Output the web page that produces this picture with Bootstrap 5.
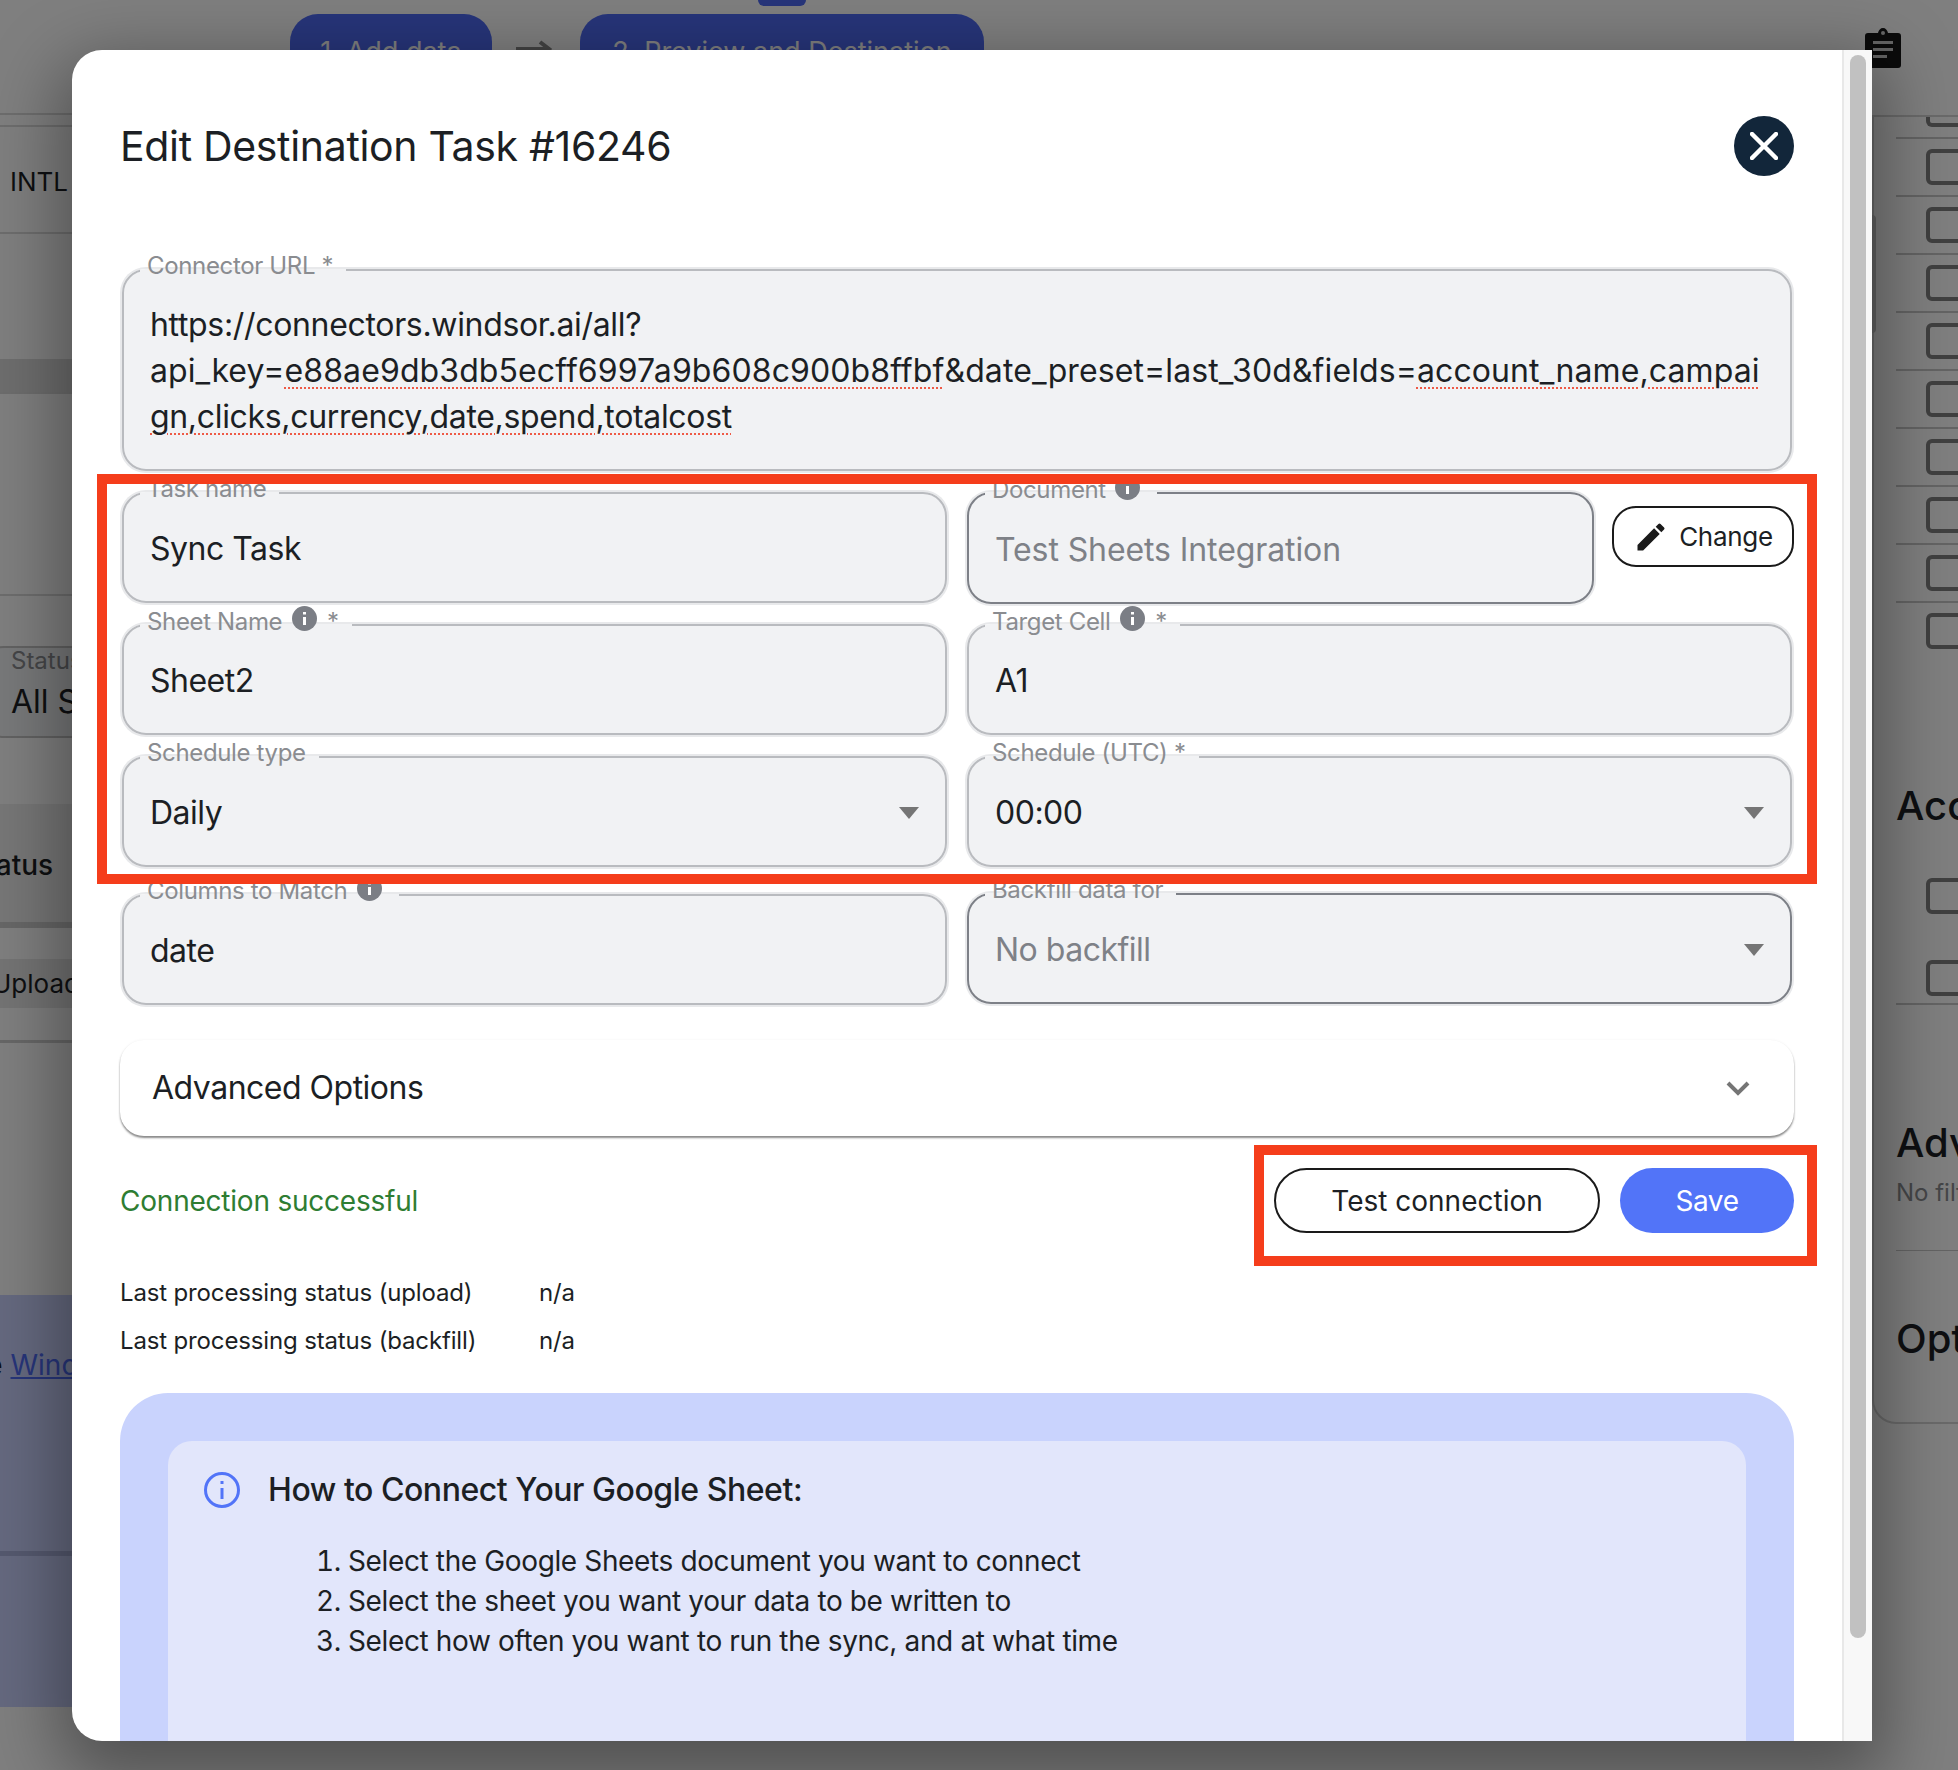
<!DOCTYPE html>
<html lang="en">
<head>
  <meta charset="UTF-8">
  <meta name="viewport" content="width=device-width, initial-scale=1.0">
  <title>Edit Destination Task</title>
  <link href="https://cdn.jsdelivr.net/npm/bootstrap@5.3.0/dist/css/bootstrap.min.css" rel="stylesheet">
  <style>
    html, body { height: 1770px; overflow: hidden; background: #fff; }
    body { font-family: Inter, "Liberation Sans", sans-serif; color: #1c1f24; position: relative; }

    /* page behind the dialog */
    .behind { height: 1770px; }
    .left-pane { width: 300px; overflow: hidden; font-size: 28px; flex: none; }
    .mid-pane { flex: 1 1 auto; position: relative; }
    .right-pane { width: 106px; flex: none; overflow: hidden; }
    .left-rule { border-bottom: 2px solid #dadada; }
    .lp-a { height: 115px; }
    .lp-b { height: 12px; }
    .lp-c { height: 107px; padding: 4px 0 0 10px; display: flex; align-items: center; font-size: 26px; }
    .lp-d { height: 125px; }
    .lp-band { height: 35px; background: #dcdcdc; }
    .lp-e { height: 202px; }
    .lp-field { margin: 50px 0 0 -20px; height: 92px; background: #f1f2f4; border: 2px solid #c4c4c4; border-radius: 24px; padding-left: 29px; }
    .lp-label { font-size: 24px; color: #8a8c90; line-height: 30px; margin-top: -2px; }
    .lp-value { line-height: 52px; font-size: 32px; }
    .lp-head { margin-top: 66px; height: 124px; background: #eee; font-weight: 500; padding-top: 40px; text-indent: -32px; border-bottom: 6px solid #cfcfcf; }
    .lp-upload { margin-top: 31px; height: 49px; background: #e8e8e8; line-height: 49px; text-indent: -8px; font-size: 26px; }
    .lp-end { height: 35px; border-bottom: 3px solid #cfcfcf; }
    .lp-panel { margin-top: 252px; height: 412px; background: #cad2fe; padding-top: 49px; text-indent: -48px; }
    .lp-panel a { color: #4e6af5; }
    .lp-panel-rule { margin-top: 165px; border-top: 5px solid #aab2de; }

    .step-pill { position: absolute; top: 14px; height: 80px; background: #4e6af5; color: #fff; border-radius: 28px; font-size: 27px; line-height: 76px; text-align: center; }
    .step-one { left: -10px; width: 202px; }
    .step-two { left: 280px; width: 404px; }
    .step-tab { position: absolute; top: 0; left: 458px; width: 48px; height: 6px; background: #4e6af5; border-radius: 0 0 6px 6px; }
    .step-arrow { position: absolute; left: 216px; top: 40px; }

    .clip-icon { display: block; margin: 28px 0 47px 13px; }
    .side-card { height: 1309px; border: 2px solid #d4d4d4; border-right: 0; border-radius: 0 0 0 24px; margin-left: 20px; padding-left: 22px; overflow: hidden; }
    .side-row { height: 58px; padding-top: 10px; border-bottom: 2px solid #c8c8c8; }
    .side-row.side-first { height: 22px; padding-top: 0; }
    .side-row.side-last { border-bottom: 0; height: 46px; }
    .tick { display: block; height: 36px; width: 70px; border: 4px solid #808080; border-radius: 6px; margin-left: 30px; }
    .side-first .tick { height: 10px; border-top: 0; border-radius: 0 0 6px 6px; }
    .side-title { font-size: 40px; font-weight: 500; line-height: 50px; white-space: nowrap; }
    .st-acc { margin-top: 132px; }
    .st-box-a { margin-top: 47px; }
    .st-box-b { margin-top: 46px; }
    .side-rule { margin-top: 7px; border-bottom: 2px solid #c8c8c8; }
    .st-adv { margin-top: 113px; }
    .side-note { font-size: 24px; color: #8a8c90; line-height: 30px; margin-top: 10px; white-space: nowrap; }
    .side-rule-b { margin-top: 42px; border-bottom: 1px solid #c8c8c8; }
    .st-opt { margin-top: 63px; }
    .thin-bar { position: absolute; left: 1872px; top: 215px; width: 4px; height: 118px; background: #c4c4c4; border-radius: 0 4px 4px 0; }

    .dim-layer { position: absolute; inset: 0; background: rgba(0,0,0,.5); }

    /* dialog */
    .task-dialog { position: absolute; left: 72px; top: 50px; width: 1800px; height: 1691px; background: #fff; border-radius: 30px 0 0 30px; overflow: hidden; box-shadow: 0 24px 70px 14px rgba(0,0,0,.36); }
    .dialog-body { flex: 1 1 auto; min-width: 0; padding: 66px 48px 0; }
    .scroll-rail { flex: none; width: 30px; background: #f8f8f8; border-left: 2px solid #e8e8e8; padding: 5px 6px 0; }
    .scroll-thumb { height: 1583px; background: #c1c1c1; border-radius: 10px; }

    .dialog-title { font-size: 41px; font-weight: 400; letter-spacing: -.33px; margin: 0; line-height: 60px; color: #1c1f24; }
    .close-round { width: 60px; height: 60px; background: #12263a; border: 0; border-radius: 50%; padding: 0; display: flex; align-items: center; justify-content: center; }
    .dialog-head { margin-bottom: 90px; }

    .outline-field { margin: 0 2px; padding: 0; min-width: 0; border: 2px solid #b9bbbf; border-radius: 24px; background: #f1f2f4; box-shadow: 0 0 0 2px #e8e9eb; }
    .outline-field.is-locked { border-color: #7d8087; }
    .outline-field legend { float: none; width: auto; margin: 0 0 0 16px; padding: 0 13px 8px 7px; font-size: 24px; line-height: 0; letter-spacing: -.35px; color: #8a8c90; white-space: nowrap; }
    .tip-dot { display: inline-block; vertical-align: 8.700px; margin: -12.500px 4px -12.500px 3px; position: relative; top: -2px; }
    .field-value { height: 104px; padding: 0 26px; font-size: 32px; letter-spacing: -.5px; display: flex; align-items: center; justify-content: space-between; color: #1c1f24; }
    .is-locked .field-value { color: #7e8187; }
    .doc-field .field-value { letter-spacing: -.1px; }
    .url-value { padding: 28px 26px 29px; font-size: 32px; line-height: 46px; letter-spacing: -.33px; white-space: nowrap; overflow: hidden; }
    .url-long { letter-spacing: .1px; }
    .spell { text-decoration: underline dotted #ee5a46 2px; text-underline-offset: 5px; }
    .url-wrap { margin-bottom: 18px; }
    .row-gap { --bs-gutter-x: 16px; margin-bottom: 18px; }
    .row-gap-first { margin-bottom: 17px; }
    .row-gap-last { margin-bottom: 23px; }
    .change-btn { flex: none; margin-top: 17px; width: 182px; height: 61px; border: 2px solid #1a1a1a; border-radius: 24px; background: #fff; font-size: 26px; letter-spacing: -.3px; padding: 0; color: #1c1f24; gap: 10px; }
    .change-btn:hover { background: #fff; color: #1c1f24; border-color: #1a1a1a; }
    .doc-field { flex: 1 1 auto; }

    .advanced-card { margin-top: 35px; height: 96px; border: 0; border-radius: 24px; box-shadow: 0 2px 2px rgba(0,0,0,.45), 0 0 3px rgba(0,0,0,.05); padding: 0 44px 0 32px; font-size: 32px; letter-spacing: -.5px; }
    .result-bar { margin-top: 32px; height: 65px; }
    .action-gap { gap: 20px; }
    .ok-text { font-size: 28px; letter-spacing: -.22px; color: #2e7d32; }
    .pill-outline { width: 326px; height: 65px; padding: 0; border: 2px solid #1a1a1a; border-radius: 33px; background: #fff; font-size: 28px; letter-spacing: 0; color: #1c1f24; }
    .pill-solid { width: 174px; height: 65px; padding: 0; border: 0; border-radius: 33px; background: #5274f8; font-size: 28px; letter-spacing: -.4px; color: #fff; }
    .status-list { margin-top: 36px; font-size: 24px; line-height: 48px; letter-spacing: -.15px; }
    .status-name { width: 419px; flex: none; }
    .howto-outer { margin-top: 28px; padding: 48px 48px 0; background: #c9d3fd; border-radius: 48px 48px 0 0; }
    .howto-inner { height: 405px; background: #e2e6fb; border-radius: 24px 24px 0 0; padding: 30px 36px; }
    .howto-gap { gap: 28px; }
    .howto-title { font-size: 32px; font-weight: 500; letter-spacing: -.45px; margin: 0; line-height: 38px; }
    .howto-list { margin: 32px 0 0 144px; padding: 0; font-size: 28px; line-height: 40px; letter-spacing: -.37px; }

    .callout { position: absolute; border: 10px solid #f53d1b; pointer-events: none; }
    .callout-fields { left: 97px; top: 474px; width: 1720px; height: 410px; }
    .callout-actions { left: 1254px; top: 1145px; width: 563px; height: 121px; }
  </style>
</head>
<body>
  <div class="behind d-flex">
    <div class="left-pane">
      <div class="lp-a left-rule"></div>
      <div class="lp-b left-rule"></div>
      <div class="lp-c left-rule">INTL</div>
      <div class="lp-d"></div>
      <div class="lp-band left-rule"></div>
      <div class="lp-e left-rule"></div>
      <div class="lp-field">
        <div class="lp-label">Status</div>
        <div class="lp-value">All Statuses</div>
      </div>
      <div class="lp-head">Status</div>
      <div class="lp-upload">Upload</div>
      <div class="lp-end"></div>
      <div class="lp-panel">
        <div>See <a href="#">Windsor</a></div>
        <div class="lp-panel-rule"></div>
      </div>
    </div>
    <div class="mid-pane">
      <div class="step-tab"></div>
      <div class="step-pill step-one">1. Add data</div>
      <svg class="step-arrow" width="36" height="20" viewBox="0 0 36 20"><path d="M0 9h30M24 2l9 7-9 7" fill="none" stroke="#888" stroke-width="4"/></svg>
      <div class="step-pill step-two">2. Preview and Destination</div>
    </div>
    <div class="right-pane">
      <svg class="clip-icon" width="36" height="40" viewBox="0 0 36 40"><path fill="#161616" d="M3 5h10c.6-3 2.5-5 5-5s4.400 2 5 5h10a3 3 0 0 1 3 3v29a3 3 0 0 1-3 3H3a3 3 0 0 1-3-3V8a3 3 0 0 1 3-3z"/><circle cx="18" cy="5" r="2" fill="#ccc"/><path fill="#ccc" d="M8 13h20v3H8zM8 20h20v3H8zM8 27h14v3H8z"/></svg>
      <div class="side-card">
        <div class="side-row side-first"><span class="tick"></span></div>
        <div class="side-row"><span class="tick"></span></div>
        <div class="side-row"><span class="tick"></span></div>
        <div class="side-row"><span class="tick"></span></div>
        <div class="side-row"><span class="tick"></span></div>
        <div class="side-row"><span class="tick"></span></div>
        <div class="side-row"><span class="tick"></span></div>
        <div class="side-row"><span class="tick"></span></div>
        <div class="side-row"><span class="tick"></span></div>
        <div class="side-row side-last"><span class="tick"></span></div>
        <div class="side-title st-acc">Accounts</div>
        <span class="tick st-box-a"></span>
        <span class="tick st-box-b"></span>
        <div class="side-rule"></div>
        <div class="side-title st-adv">Advanced</div>
        <div class="side-note">No filters</div>
        <div class="side-rule-b"></div>
        <div class="side-title st-opt">Options</div>
      </div>
    </div>
  </div>
  <div class="thin-bar"></div>
  <div class="dim-layer"></div>

  <div class="task-dialog d-flex">
    <div class="dialog-body">
      <div class="dialog-head d-flex justify-content-between align-items-center">
        <h2 class="dialog-title">Edit Destination Task #16246</h2>
        <button class="close-round" type="button" aria-label="Close">
          <svg width="28" height="28" viewBox="0 0 28 28"><path d="M2 2l24 24M26 2L2 26" stroke="#fff" stroke-width="4.500" stroke-linecap="round"/></svg>
        </button>
      </div>

      <fieldset class="outline-field url-wrap">
        <legend>Connector URL *</legend>
        <div class="url-value">https://connectors.windsor.ai/all?<br><span class="url-long">api_key=<span class="spell">e88ae9db3db5ecff6997a9b608c900b8ffbf</span>&amp;date_preset=last_30d&amp;fields=<span class="spell">account_name,campai</span></span><br><span class="spell">gn,clicks,currency,date,spend,totalcost</span></div>
      </fieldset>

      <div class="row row-gap row-gap-first">
        <div class="col-6">
          <fieldset class="outline-field">
            <legend>Task name</legend>
            <div class="field-value">Sync Task</div>
          </fieldset>
        </div>
        <div class="col-6 d-flex gap-3">
          <fieldset class="outline-field is-locked doc-field">
            <legend>Document <svg class="tip-dot" width="25" height="25" viewBox="0 0 25 25"><circle cx="12.500" cy="12.500" r="12.500" fill="#7b7e85"/><path d="M12.500 11v8M12.500 6v2.500" stroke="#fff" stroke-width="3"/></svg></legend>
            <div class="field-value">Test Sheets Integration</div>
          </fieldset>
          <button class="btn change-btn d-flex align-items-center justify-content-center" type="button">
            <svg width="36" height="36" viewBox="0 0 24 24"><path fill="#1a1a1a" d="M3 17.250V21h3.750L17.810 9.940l-3.750-3.750L3 17.250zM20.710 7.040a1 1 0 0 0 0-1.410l-2.340-2.340a1 1 0 0 0-1.410 0l-1.830 1.830 3.750 3.750 1.830-1.830z"/></svg>
            <span>Change</span>
          </button>
        </div>
      </div>

      <div class="row row-gap">
        <div class="col-6">
          <fieldset class="outline-field">
            <legend>Sheet Name <svg class="tip-dot" width="25" height="25" viewBox="0 0 25 25"><circle cx="12.500" cy="12.500" r="12.500" fill="#7b7e85"/><path d="M12.500 11v8M12.500 6v2.500" stroke="#fff" stroke-width="3"/></svg> *</legend>
            <div class="field-value">Sheet2</div>
          </fieldset>
        </div>
        <div class="col-6">
          <fieldset class="outline-field">
            <legend>Target Cell <svg class="tip-dot" width="25" height="25" viewBox="0 0 25 25"><circle cx="12.500" cy="12.500" r="12.500" fill="#7b7e85"/><path d="M12.500 11v8M12.500 6v2.500" stroke="#fff" stroke-width="3"/></svg> *</legend>
            <div class="field-value">A1</div>
          </fieldset>
        </div>
      </div>

      <div class="row row-gap row-gap-last">
        <div class="col-6">
          <fieldset class="outline-field">
            <legend>Schedule type</legend>
            <div class="field-value">Daily
              <svg width="20" height="12" viewBox="0 0 20 12"><path d="M0 0h20L10 12z" fill="#757575"/></svg>
            </div>
          </fieldset>
        </div>
        <div class="col-6">
          <fieldset class="outline-field">
            <legend>Schedule (UTC) *</legend>
            <div class="field-value">00:00
              <svg width="20" height="12" viewBox="0 0 20 12"><path d="M0 0h20L10 12z" fill="#757575"/></svg>
            </div>
          </fieldset>
        </div>
      </div>

      <div class="row row-gap mb-0">
        <div class="col-6">
          <fieldset class="outline-field">
            <legend>Columns to Match <svg class="tip-dot" width="25" height="25" viewBox="0 0 25 25"><circle cx="12.500" cy="12.500" r="12.500" fill="#7b7e85"/><path d="M12.500 11v8M12.500 6v2.500" stroke="#fff" stroke-width="3"/></svg></legend>
            <div class="field-value">date</div>
          </fieldset>
        </div>
        <div class="col-6">
          <fieldset class="outline-field is-locked">
            <legend>Backfill data for</legend>
            <div class="field-value">No backfill
              <svg width="20" height="12" viewBox="0 0 20 12"><path d="M0 0h20L10 12z" fill="#757575"/></svg>
            </div>
          </fieldset>
        </div>
      </div>

      <div class="card advanced-card d-flex flex-row justify-content-between align-items-center">
        <span>Advanced Options</span>
        <svg width="24" height="15" viewBox="0 0 24 15"><path d="M2 2l10 10L22 2" fill="none" stroke="#757575" stroke-width="4"/></svg>
      </div>

      <div class="result-bar d-flex justify-content-between align-items-center">
        <span class="ok-text">Connection successful</span>
        <div class="d-flex action-gap">
          <button class="btn pill-outline" type="button">Test connection</button>
          <button class="btn pill-solid" type="button">Save</button>
        </div>
      </div>

      <div class="status-list">
        <div class="d-flex"><span class="status-name">Last processing status (upload)</span><span>n/a</span></div>
        <div class="d-flex"><span class="status-name">Last processing status (backfill)</span><span>n/a</span></div>
      </div>

      <div class="howto-outer">
        <div class="howto-inner">
          <div class="d-flex align-items-center howto-gap">
            <svg width="36" height="36" viewBox="0 0 36 36"><circle cx="18" cy="18" r="16.500" fill="none" stroke="#5274f8" stroke-width="3"/><path d="M18 16v11M18 9v3" stroke="#5274f8" stroke-width="3"/></svg>
            <h3 class="howto-title">How to Connect Your Google Sheet:</h3>
          </div>
          <ol class="howto-list">
            <li>Select the Google Sheets document you want to connect</li>
            <li>Select the sheet you want your data to be written to</li>
            <li>Select how often you want to run the sync, and at what time</li>
          </ol>
        </div>
      </div>
    </div>
    <div class="scroll-rail"><div class="scroll-thumb"></div></div>
  </div>

  <div class="callout callout-fields"></div>
  <div class="callout callout-actions"></div>

  <script src="https://cdn.jsdelivr.net/npm/bootstrap@5.3.0/dist/js/bootstrap.bundle.min.js"></script>
</body>
</html>
